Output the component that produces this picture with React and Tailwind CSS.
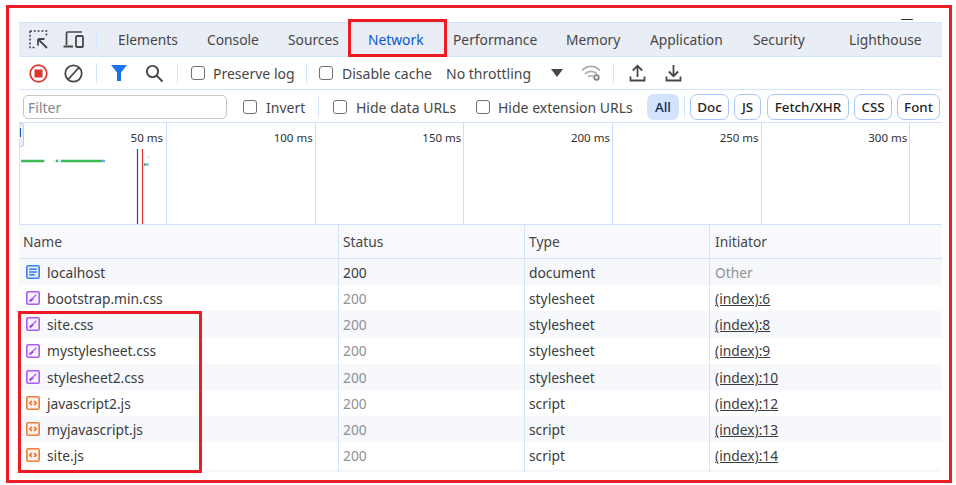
import React from "react";

const tabs = [
  ["Elements", "w-[89px]"],
  ["Console", "w-[81px]"],
  ["Sources", "w-[80px]"],
  ["Network", "w-[85px] text-[#0b57d0]"],
  ["Performance", "w-[113px]"],
  ["Memory", "w-[84px]"],
  ["Application", "w-[103px]"],
  ["Security", "w-[96px]"],
  ["Lighthouse", "w-[80px]"],
];

const rows = [
  ["localhost", "doc", "200", "document", "Other"],
  ["bootstrap.min.css", "css", "200", "stylesheet", "(index):6"],
  ["site.css", "css", "200", "stylesheet", "(index):8"],
  ["mystylesheet.css", "css", "200", "stylesheet", "(index):9"],
  ["stylesheet2.css", "css", "200", "stylesheet", "(index):10"],
  ["javascript2.js", "js", "200", "script", "(index):12"],
  ["myjavascript.js", "js", "200", "script", "(index):13"],
  ["site.js", "js", "200", "script", "(index):14"],
];

const ticks = ["50 ms", "100 ms", "150 ms", "200 ms", "250 ms", "300 ms"];

function FileIcon({ kind }) {
  if (kind === "doc")
    return (
      <svg width="14" height="14" viewBox="0 0 14 14" fill="none">
        <rect x="0.8" y="0.8" width="12.4" height="12.4" rx="1.5" fill="#e3edfd" stroke="#3b82f0" strokeWidth="1.6" />
        <path d="M3.3 4.2h7.4M3.3 7h7.400M3.300 9.800h5.400" stroke="#2f76e8" strokeWidth="1.5" />
      </svg>
    );
  if (kind === "css")
    return (
      <svg width="14" height="14" viewBox="0 0 14 14" fill="none">
        <rect x="0.8" y="0.8" width="12.4" height="12.4" rx="1.5" fill="#f8f1ff" stroke="#ab5cf2" strokeWidth="1.6" />
        <path d="M6.500 7.500L10.300 3.800" stroke="#ab5cf2" strokeWidth="1.200" />
        <path d="M3.700 10.300L7 7.500" stroke="#9d3ff0" strokeWidth="2.200" />
      </svg>
    );
  return (
    <svg width="14" height="14" viewBox="0 0 14 14" fill="none">
      <rect x="0.8" y="0.8" width="12.4" height="12.4" rx="1.5" fill="#fdf0e8" stroke="#ee7d3b" strokeWidth="1.6" />
      <path d="M5.800 5L3.900 7l1.900 2M8.200 5l1.900 2-1.900 2" stroke="#ea6a1f" strokeWidth="1.600" />
    </svg>
  );
}

function Checkbox() {
  return <span className="block w-[14px] h-[14px] shrink-0 rounded-[3px] border border-[#6f7276] bg-white" />;
}

function Sep({ cls }) {
  return <span className={`block w-px h-5 bg-[#d3e3fd] shrink-0 ${cls}`} />;
}

function Pill({ children, cls }) {
  return (
    <span className={`flex items-center justify-center h-[26px] rounded-[7px] border border-[#a8c7fa] text-[13.4px] font-medium text-[#1f1f1f] shrink-0 ${cls}`}>
      {children}
    </span>
  );
}

export default function App() {
  return (
    <div className="relative w-[956px] h-[485px] overflow-hidden bg-white pl-[6px] pt-[5px] text-[13.8px] text-[#474747] font-['Noto_Sans','Open_Sans',sans-serif]">
      <div className="w-[946px] h-[478px] border-[3px] border-[#ed1c24] pl-[10px] pt-[11px]">
        <div className="w-[923px]">
          <div className="h-[3px] bg-white" />
          {/* Tabs */}
          <div className="h-[35px] flex items-center bg-[#e9edf6] border-y border-[#d3e3fd]">
            <svg className="ml-[10px] shrink-0" width="20" height="20" viewBox="0 0 20 20" fill="none">
              <path d="M1 1h16.500v5M1 1v16.500h6" stroke="#474747" strokeWidth="1.600" strokeDasharray="2 1.800" />
              <path d="M18 18L9 9M9 9v6.500M9 9h6.500" stroke="#474747" strokeWidth="1.800" />
            </svg>
            <svg className="ml-[14px] shrink-0" width="21" height="18" viewBox="0 0 21 18" fill="none">
              <path d="M3.500 14V2.200c0-.7.5-1.200 1.200-1.200H19" stroke="#474747" strokeWidth="1.700" />
              <path d="M0.500 15.500H10" stroke="#474747" strokeWidth="2" />
              <rect x="13" y="5" width="7" height="11" rx="1" stroke="#474747" strokeWidth="1.800" />
            </svg>
            <span className="block w-px h-5 bg-[#d3e3fd] ml-[12px] mr-[21px] shrink-0" />
            {tabs.map(([t, c]) => (
              <span key={t} className={`block shrink-0 whitespace-nowrap pt-[2px] ${c}`}>{t}</span>
            ))}
          </div>
          {/* Toolbar */}
          <div className="h-[33px] flex items-center border-b border-[#d3e3fd] bg-white text-[14px]">
            <svg className="ml-[10px] shrink-0" width="19" height="19" viewBox="0 0 19 19" fill="none">
              <circle cx="9.500" cy="9.500" r="8.300" stroke="#dc362e" strokeWidth="1.700" />
              <rect x="5.500" y="5.500" width="8" height="8" fill="#dc362e" />
            </svg>
            <svg className="ml-[16px] shrink-0" width="19" height="19" viewBox="0 0 19 19" fill="none">
              <circle cx="9.500" cy="9.500" r="8.200" stroke="#474747" strokeWidth="1.800" />
              <path d="M15 3.500L4 15.500" stroke="#474747" strokeWidth="1.800" />
            </svg>
            <Sep cls="ml-[13px]" />
            <svg className="ml-[14px] shrink-0" width="16" height="16" viewBox="0 0 16 16">
              <path d="M0 0h16l-6 7.500V16H6V7.500z" fill="#1a73e8" />
            </svg>
            <svg className="ml-[18px] shrink-0" width="19" height="19" viewBox="0 0 19 19" fill="none">
              <circle cx="7.500" cy="7.500" r="5.600" stroke="#474747" strokeWidth="1.900" />
              <path d="M11.600 11.600L17.500 17.500" stroke="#474747" strokeWidth="2" />
            </svg>
            <Sep cls="ml-[13px]" />
            <span className="ml-[13px]"><Checkbox /></span>
            <span className="block w-[93px] ml-[8px] shrink-0 whitespace-nowrap">Preserve log</span>
            <Sep cls="ml-0" />
            <span className="ml-[12px]"><Checkbox /></span>
            <span className="block w-[104px] ml-[9px] shrink-0 whitespace-nowrap">Disable cache</span>
            <span className="block w-[105px] shrink-0 whitespace-nowrap">No throttling</span>
            <svg className="shrink-0" width="12" height="8" viewBox="0 0 12 8"><path d="M0 0h12L6 8z" fill="#474747" /></svg>
            <svg className="ml-[18px] shrink-0" width="21" height="18" viewBox="0 0 21 18" fill="none">
              <path d="M1 6.500C6 1 14 1 19 6.500M4 10c3.500-3.500 8.500-3.500 12 0M7 13c1.800-1.500 3.700-1.500 5-0.500" stroke="#a8adb2" strokeWidth="1.600" />
              <circle cx="15.500" cy="13.500" r="2.300" stroke="#80868b" strokeWidth="1.800" />
            </svg>
            <Sep cls="ml-[11px]" />
            <svg className="ml-[15px] shrink-0" width="17" height="18" viewBox="0 0 17 18" fill="none">
              <path d="M8.500 13V2M3.800 6.500L8.500 1.800l4.700 4.700" stroke="#474747" strokeWidth="1.800" />
              <path d="M1.500 12.500v4h14v-4" stroke="#474747" strokeWidth="1.800" />
            </svg>
            <svg className="ml-[19px] shrink-0" width="17" height="18" viewBox="0 0 17 18" fill="none">
              <path d="M8.500 1v11M3.800 7.500l4.700 4.700 4.700-4.700" stroke="#474747" strokeWidth="1.800" />
              <path d="M1.500 12.500v4h14v-4" stroke="#474747" strokeWidth="1.800" />
            </svg>
          </div>
          {/* Filter bar */}
          <div className="h-[33px] flex items-center border-b border-[#d3e3fd] bg-white pt-[2px] text-[14px]">
            <span className="flex items-center ml-[4px] w-[204px] h-[24px] shrink-0 rounded-[5px] border border-[#c4c7c5] pl-[4px] text-[#80868b]">Filter</span>
            <span className="ml-[16px]"><Checkbox /></span>
            <span className="block w-[37px] ml-[9px] shrink-0 whitespace-nowrap">Invert</span>
            <Sep cls="ml-[15px]" />
            <span className="ml-[14px]"><Checkbox /></span>
            <span className="block w-[101px] ml-[9px] shrink-0 whitespace-nowrap">Hide data URLs</span>
            <span className="ml-[19px]"><Checkbox /></span>
            <span className="block w-[135px] ml-[8px] shrink-0 whitespace-nowrap">Hide extension URLs</span>
            <span className="flex items-center justify-center ml-[14px] w-[32px] h-[26px] rounded-[7px] bg-[#d3e3fd] text-[13.4px] font-medium text-[#0a2a5c] shrink-0">All</span>
            <Sep cls="ml-[5px]" />
            <Pill cls="ml-[5px] w-[39px]">Doc</Pill>
            <Pill cls="ml-[5px] w-[27px]">JS</Pill>
            <Pill cls="ml-[6px] w-[82px]">Fetch/XHR</Pill>
            <Pill cls="ml-[5px] w-[38px]">CSS</Pill>
            <Pill cls="ml-[5px] w-[43px]">Font</Pill>
          </div>
          {/* Overview */}
          <div className="relative h-[102px] flex border-l border-b border-[#d3e3fd] bg-white">
            {ticks.map((t, i) => (
              <div key={t} className={`h-full shrink-0 border-r border-[#c9dcfa] pt-[5px] text-right text-[11.5px] leading-[20px] text-[#303030] ${i === 0 ? "w-[147px] pr-[3px]" : "w-[148.67px] pr-[2px]"}`}>
                {t}
              </div>
            ))}
            <div className="absolute left-0 top-0 w-[4px] h-[24px] rounded-r-[3px] border border-l-0 border-[#b9d0f5] bg-[#e8f0fe]" />
            <svg className="absolute left-0 top-0" width="140" height="101" viewBox="0 0 140 101" fill="none">
              <path d="M0.500 5v9" stroke="#1a5fb4" strokeWidth="1" />
              <path d="M1 38h23" stroke="#3cba54" strokeWidth="2.500" />
              <path d="M24 38h1.500" stroke="#cfe8d6" strokeWidth="2.500" />
              <path d="M33 38h3" stroke="#e3eefb" strokeWidth="3" />
              <path d="M36 38h2" stroke="#3cba54" strokeWidth="2.500" />
              <path d="M38 38h3" stroke="#d5e8f8" strokeWidth="3" />
              <path d="M41 38h41" stroke="#3cba54" strokeWidth="2.500" />
              <path d="M82 38h3" stroke="#6ea8f7" strokeWidth="2.500" />
              <path d="M117.500 26v75" stroke="#1f45a8" strokeWidth="1.200" />
              <path d="M122.500 26v75" stroke="#e5352b" strokeWidth="1.200" />
              <path d="M124 41.500h2" stroke="#3cba54" strokeWidth="2.500" />
              <path d="M126 41.500h3" stroke="#93bdf7" strokeWidth="2.500" />
              <path d="M127.500 34h2" stroke="#e4e4e4" strokeWidth="2.500" />
            </svg>
          </div>
          {/* Header */}
          <div className="h-[34px] grid grid-cols-[319px_186px_185px_233px] border-b border-[#d3e3fd] bg-[#f8f9fd]">
            {["Name", "Status", "Type", "Initiator"].map((h, i) => (
              <div key={h} className={`flex items-center pt-[2px] ${i === 3 ? "pl-[5px]" : "pl-[4px]"} ${i === 0 ? "" : "border-l border-[#d3e3fd]"}`}>{h}</div>
            ))}
          </div>
          {/* Rows */}
          {rows.map(([name, kind, status, type, init], i) => (
            <div key={name} className={`h-[26.2px] grid grid-cols-[319px_186px_185px_233px] ${i % 2 === 0 ? "bg-[#f6f8fc]" : "bg-white"}`}>
              <div className="flex items-center pl-[7px] text-[#3c3c3c]">
                <FileIcon kind={kind} />
                <span className="ml-[7px] pt-[2px] whitespace-nowrap">{name}</span>
              </div>
              <div className={`flex items-center pt-[2px] pl-[4px] border-l border-[#d3e3fd] ${i === 0 ? "text-[#3c3c3c]" : "text-[#8f9194]"}`}>{status}</div>
              <div className="flex items-center pt-[2px] pl-[4px] border-l border-[#d3e3fd] text-[#3c3c3c]">{type}</div>
              <div className={`flex items-center pt-[2px] pl-[5px] border-l border-[#d3e3fd] ${i === 0 ? "text-[#8f9194]" : "text-[#3c3c3c] underline"}`}>{init}</div>
            </div>
          ))}
          <div className="h-[3px] bg-[#f6f8fc] grid grid-cols-[319px_186px_185px_233px]">
            <div /><div className="border-l border-[#d3e3fd]" /><div className="border-l border-[#d3e3fd]" /><div className="border-l border-[#d3e3fd]" />
          </div>
        </div>
      </div>
      {/* Sliver of a cut-off control above the tab strip */}
      <div className="absolute left-[901px] top-[19px] w-[12px] h-px rounded-full bg-[#303030]" />
      {/* Red highlight boxes lying over the panel */}
      <div className="absolute left-[348px] top-[19px] w-[99px] h-[38px] border-[3px] border-[#ed1c24]" />
      <div className="absolute left-[18px] top-[311px] w-[184px] h-[162px] border-[3px] border-[#ed1c24]" />
    </div>
  );
}
